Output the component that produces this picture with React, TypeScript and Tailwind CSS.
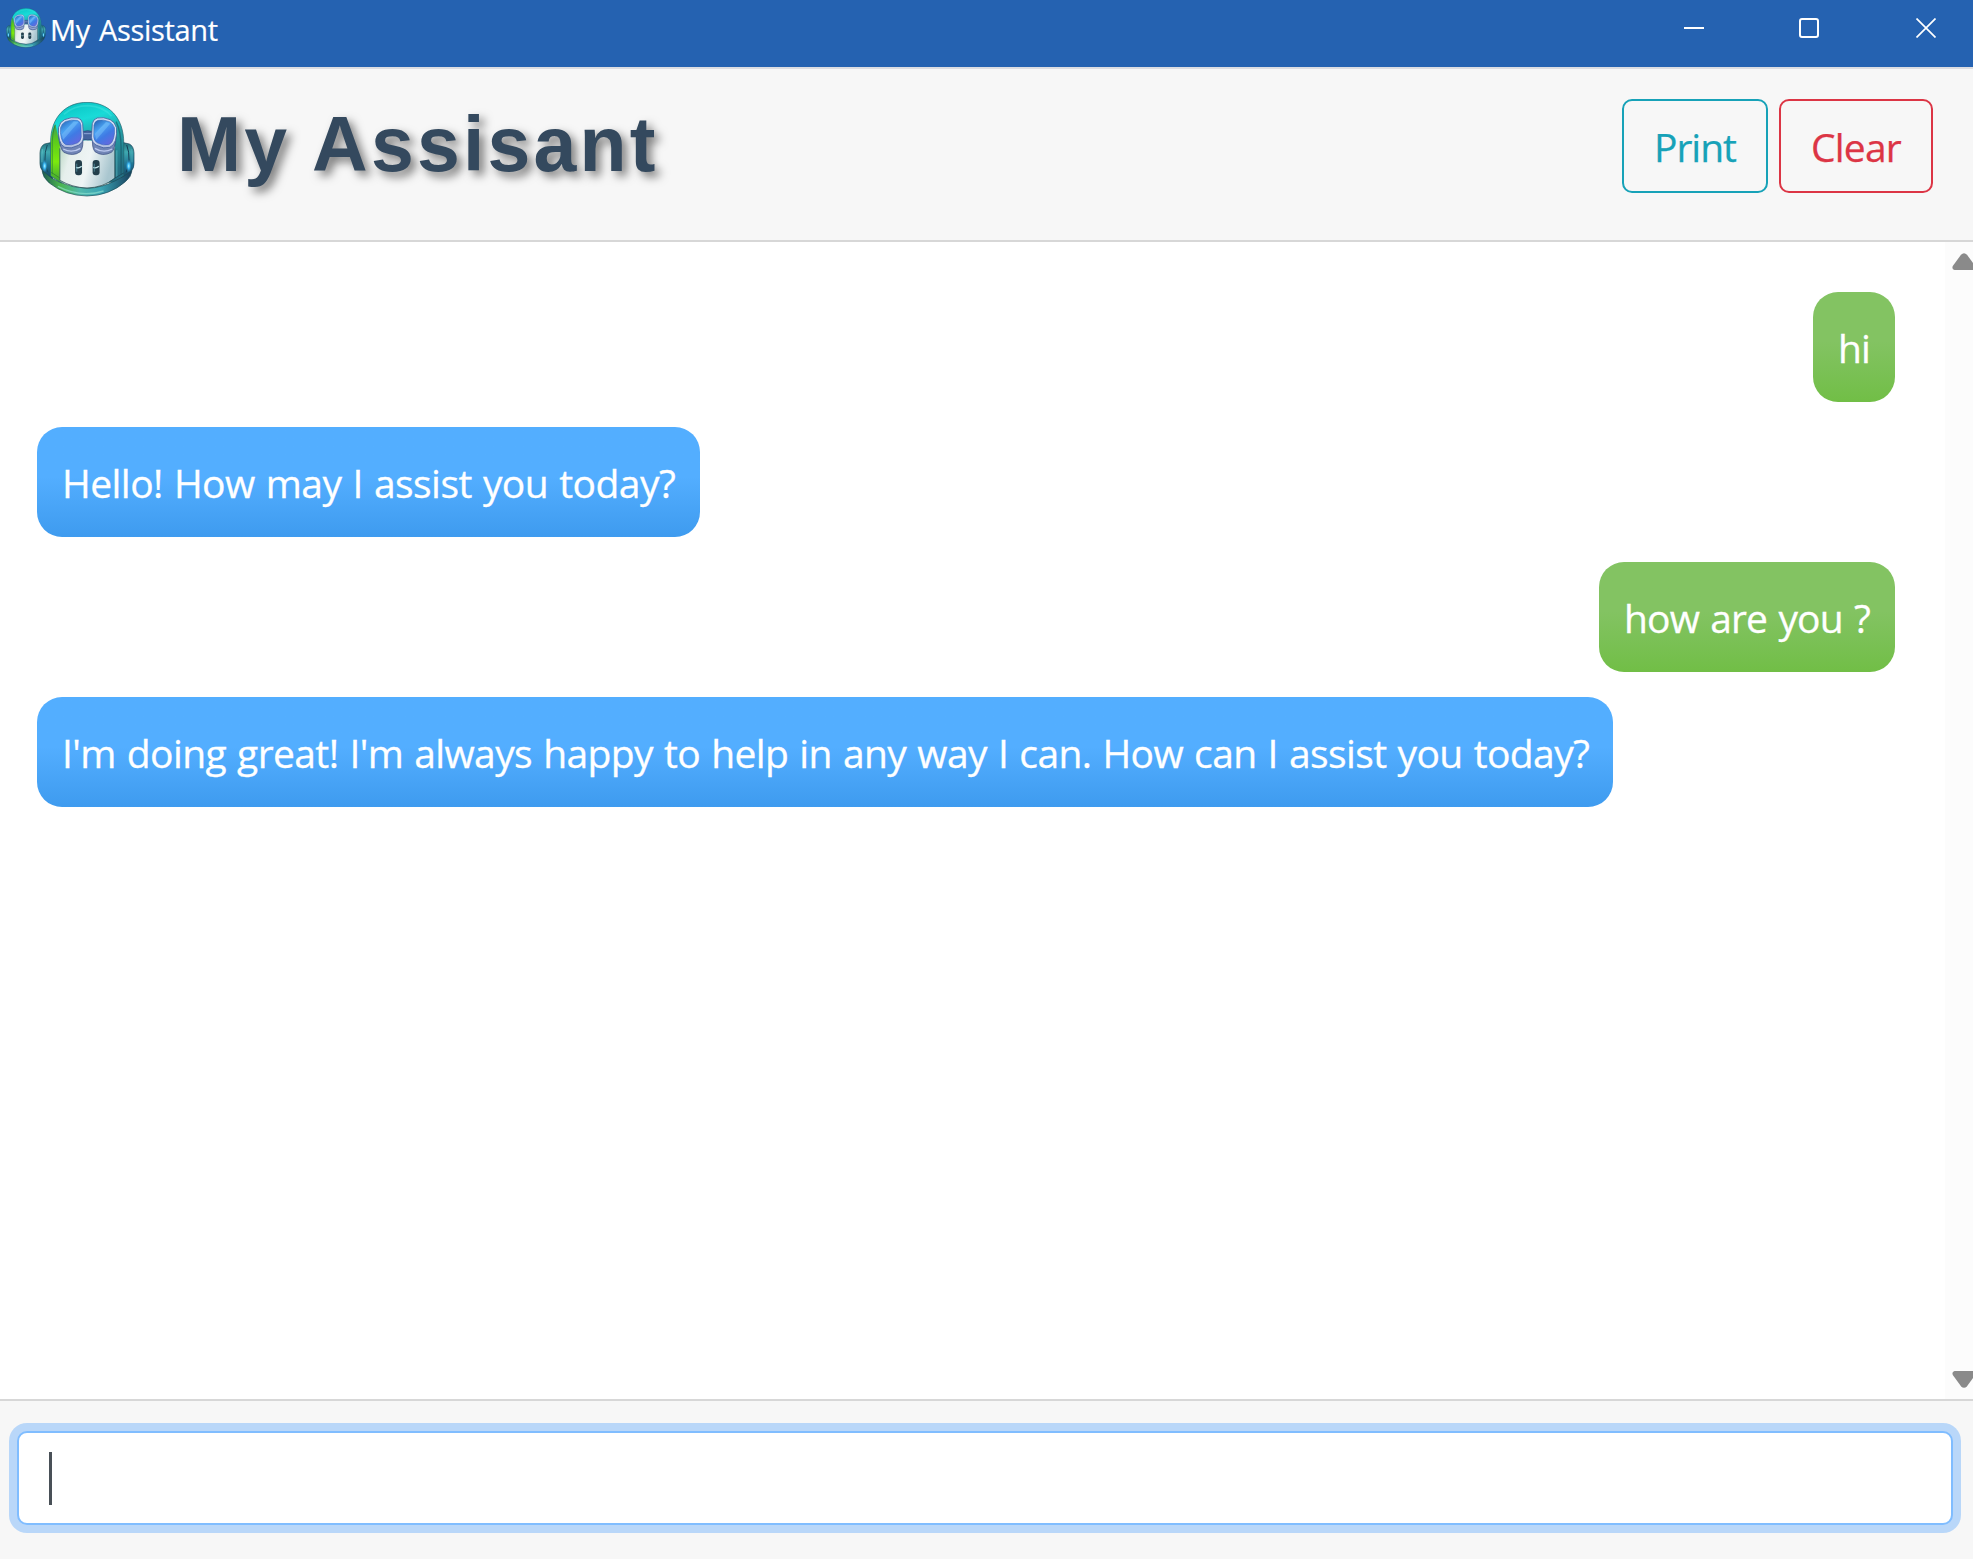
import { useId } from "react";

function Robot({ className }: { className: string }) {
  const id = useId().replace(/[^a-zA-Z0-9]/g, "");
  const u = (n: string) => `url(#${n}${id})`;
  return (
    <svg className={className} viewBox="55 51 290 285" preserveAspectRatio="none" aria-hidden="true">
      <defs>
        <linearGradient id={`dome${id}`} x1="0" y1="0" x2="0.25" y2="1">
          <stop offset="0" stopColor="#158f98" />
          <stop offset="0.12" stopColor="#0cc9c8" />
          <stop offset="0.3" stopColor="#19dbd8" />
          <stop offset="0.55" stopColor="#249fa6" />
          <stop offset="1" stopColor="#246f83" />
        </linearGradient>
        <linearGradient id={`green${id}`} x1="0" y1="0" x2="0" y2="1">
          <stop offset="0" stopColor="#3c9a58" />
          <stop offset="0.3" stopColor="#5ccb1c" />
          <stop offset="0.65" stopColor="#7bea0d" />
          <stop offset="1" stopColor="#3e9e3b" />
        </linearGradient>
        <linearGradient id={`ear${id}`} x1="0" y1="0" x2="0" y2="1">
          <stop offset="0" stopColor="#226d7a" />
          <stop offset="0.25" stopColor="#3fa9b0" />
          <stop offset="0.6" stopColor="#1d6f91" />
          <stop offset="1" stopColor="#173f52" />
        </linearGradient>
        <linearGradient id={`jaw${id}`} x1="0" y1="0" x2="1" y2="0">
          <stop offset="0" stopColor="#1e5a52" />
          <stop offset="0.2" stopColor="#4bb54c" />
          <stop offset="0.42" stopColor="#51b9ac" />
          <stop offset="0.65" stopColor="#3ba5b5" />
          <stop offset="1" stopColor="#183f5c" />
        </linearGradient>
        <linearGradient id={`face${id}`} x1="0" y1="0" x2="1" y2="0.25">
          <stop offset="0" stopColor="#b5d5c0" />
          <stop offset="0.25" stopColor="#e6efec" />
          <stop offset="0.6" stopColor="#eef4f5" />
          <stop offset="1" stopColor="#a9c6cf" />
        </linearGradient>
        <linearGradient id={`lens${id}`} x1="0.1" y1="0" x2="0.7" y2="1">
          <stop offset="0" stopColor="#2563b4" />
          <stop offset="0.35" stopColor="#4aa2f2" />
          <stop offset="0.65" stopColor="#3f7ae4" />
          <stop offset="1" stopColor="#6468de" />
        </linearGradient>
        <linearGradient id={`rim${id}`} x1="0" y1="0" x2="0" y2="1">
          <stop offset="0" stopColor="#cfdcf3" />
          <stop offset="0.6" stopColor="#e4ebfa" />
          <stop offset="1" stopColor="#aab8dd" />
        </linearGradient>
        <radialGradient id={`glow${id}`}>
          <stop offset="0" stopColor="#a8f4ff" />
          <stop offset="0.4" stopColor="#3db8f2" />
          <stop offset="1" stopColor="#2083b8" stopOpacity="0" />
        </radialGradient>
      </defs>

      {/* ear pieces */}
      <path d="M94 172 L72 177 Q59 183 58 204 V236 Q58 250 66 257 L96 288Z" fill={u("ear")} stroke="#1a4a55" strokeWidth="2" />
      <path d="M306 172 L328 177 Q341 183 342 204 V236 Q342 250 334 257 L304 288Z" fill={u("ear")} stroke="#173f5a" strokeWidth="2" />
      <path d="M80 180 Q72 200 73 226 Q74 246 82 262" fill="none" stroke="#174b5c" strokeWidth="3" />
      <path d="M320 180 Q328 200 327 226 Q326 246 318 262" fill="none" stroke="#143a52" strokeWidth="3" />
      <path d="M66 192 Q63 205 64 232" fill="none" stroke="#62bfc7" strokeWidth="3" opacity="0.7" />
      <path d="M334 192 Q337 205 336 232" fill="none" stroke="#4ea6b8" strokeWidth="3" opacity="0.7" />
      <ellipse cx="72" cy="243" rx="9" ry="20" fill={u("glow")} />
      <ellipse cx="326" cy="243" rx="9" ry="20" fill={u("glow")} />

      {/* helmet */}
      <path d="M90 272 V172 C90 94 138 52 200 52 C264 52 311 96 311 174 V272 L284 292 H118Z" fill={u("dome")} stroke="#24606c" strokeWidth="2" />
      <path d="M91 272 V172 Q92 140 104 116 L120 188 V292Z" fill={u("green")} />
      <path d="M104 120 Q94 146 95 190 V268" fill="none" stroke="#2e7d3b" strokeWidth="3" opacity="0.7" />
      <path d="M288 110 Q303 140 303 190 V268" fill="none" stroke="#1b5364" strokeWidth="4" opacity="0.6" />
      <path d="M130 88 Q160 62 204 62 Q250 64 274 94" fill="none" stroke="#58ece4" strokeWidth="5" opacity="0.35" />

      {/* jaw */}
      <path d="M64 256 Q92 282 118 292 Q160 309 200 310 Q246 308 284 288 Q312 276 336 256 Q334 276 316 290 Q268 332 200 333 Q134 332 86 294 Q66 278 64 256Z" fill={u("jaw")} stroke="#1b4c58" strokeWidth="2" />
      <path d="M112 304 Q152 325 198 326 Q226 326 250 318" fill="none" stroke="#8ce0cf" strokeWidth="4" opacity="0.65" />

      {/* face plate */}
      <path d="M118 184 Q160 168 200 166 Q244 168 284 184 V278 Q246 308 200 308 Q154 308 118 288Z" fill={u("face")} />
      <path d="M118 190 V286 Q156 308 200 309 Q248 308 284 280 V190" fill="none" stroke="#2b5358" strokeWidth="2.5" />
      <path d="M290 196 V276" stroke="#55b6be" strokeWidth="4" opacity="0.6" />
      <path d="M92 262 L118 279" stroke="#2e7b2e" strokeWidth="2" />
      <path d="M284 279 L311 264" stroke="#173f50" strokeWidth="2" />

      {/* goggles */}
      <path d="M186 140 Q202 134 218 140 V162 Q202 168 186 162Z" fill="#45649f" stroke="#2b4478" strokeWidth="2" />
      <path d="M190 146 H214" stroke="#8ba6d8" strokeWidth="3" />
      <path d="M114 150 Q118 192 130 202 Q158 216 180 200 Q190 188 187 156Z" fill="#7185b6" stroke="#34487b" strokeWidth="2" />
      <path d="M288 150 Q286 192 274 202 Q246 216 224 200 Q214 188 217 156Z" fill="#7185b6" stroke="#34487b" strokeWidth="2" />
      <path d="M128 192 Q154 206 180 190" fill="none" stroke="#bccaf0" strokeWidth="4" />
      <path d="M276 192 Q250 206 224 190" fill="none" stroke="#bccaf0" strokeWidth="4" />
      <path d="M132 104 Q152 95 173 99 Q184 102 187 116 L189 158 Q188 174 174 181 Q152 193 133 187 Q121 182 117 166 Q112 146 114 128 Q118 110 132 104Z" fill={u("rim")} stroke="#43609c" strokeWidth="2.5" />
      <path d="M270 104 Q250 95 231 99 Q219 102 216 116 L214 158 Q215 174 229 181 Q250 193 269 187 Q281 182 286 166 Q291 146 289 128 Q284 110 270 104Z" fill={u("rim")} stroke="#43609c" strokeWidth="2.5" />
      <path d="M134 110 Q154 102 171 106 Q180 109 182 121 L183 155 Q182 168 171 174 Q152 183 136 179 Q126 174 122 158 Q118 142 120 128 Q124 115 134 110Z" fill={u("lens")} stroke="#3764ac" strokeWidth="1.5" />
      <path d="M268 110 Q248 102 233 106 Q223 109 221 121 L220 155 Q221 168 232 174 Q250 183 266 179 Q277 174 281 158 Q285 142 283 128 Q278 115 268 110Z" fill={u("lens")} stroke="#3764ac" strokeWidth="1.5" />
      <path d="M124 148 L160 109 L174 112 L128 164Z" fill="#8dd0ff" opacity="0.4" />
      <path d="M224 146 L258 110 L270 116 L228 164Z" fill="#8dd0ff" opacity="0.4" />

      {/* eyes */}
      <rect x="164" y="225" width="21" height="46" rx="9" fill="#233f4c" />
      <rect x="217" y="225" width="21" height="46" rx="9" fill="#233f4c" />
      <path d="M167 247 Q175 251 184 244" fill="none" stroke="#c3e8ee" strokeWidth="4" />
      <path d="M219 247 Q227 251 236 244" fill="none" stroke="#c3e8ee" strokeWidth="4" />
      <path d="M169 236 V260 M222 236 V260" stroke="#5a9aab" strokeWidth="3" opacity="0.7" />
    </svg>
  );
}

function TitleBar() {
  return (
    <header className="flex h-[69px] shrink-0 items-start justify-between border-b-2 border-[#dcdde2] bg-[#2562b1] text-white">
      <div className="flex items-start">
        <Robot className="mt-2 ml-1.5 size-10" />
        <span className="ml-1 pt-px text-[29px] leading-[58px] tracking-[-0.35px] [word-spacing:2px] [-webkit-text-stroke:0.2px]">
          My Assistant
        </span>
      </div>
      <div className="mt-[18px] mr-[37px] flex gap-[97px]">
        <svg className="mr-[-2px] size-5" viewBox="0 0 20 20" aria-label="Minimize">
          <rect y="9" width="20" height="2" fill="white" />
        </svg>
        <svg className="size-5" viewBox="0 0 20 20" fill="none" stroke="white" strokeWidth="2" aria-label="Maximize">
          <rect x="1" y="1" width="18" height="18" rx="2" />
        </svg>
        <svg className="size-5" viewBox="0 0 20 20" stroke="white" strokeWidth="1.7" aria-label="Close">
          <path d="M0.5 0.5 L19.5 19.5 M19.5 0.5 L0.5 19.5" />
        </svg>
      </div>
    </header>
  );
}

function Toolbar() {
  return (
    <div className="flex h-[173px] shrink-0 items-start border-b-2 border-[#d7d7d7] bg-[#f7f7f7]">
      <Robot className="mt-[33px] ml-[39px] h-[95px] w-[96px]" />
      <h1 className="mt-[25px] ml-[42px] font-['Liberation_Sans',Arial,sans-serif] text-[77px] leading-[100px] font-bold tracking-[3.2px] text-[#34495e] [text-shadow:5px_5px_10px_rgba(0,0,0,0.5)]">
        My Assisant
      </h1>
      <div className="mt-[30px] mr-10 ml-auto flex gap-[11px] text-[39px] [-webkit-text-stroke:0.25px]">
        <button className="h-[94px] w-[146px] rounded-[10px] border-2 border-[#17a2b8] pt-0.5 tracking-[-1px] text-[#17a2b8]">Print</button>
        <button className="h-[94px] w-[154px] rounded-[10px] border-2 border-[#dc3545] pt-0.5 tracking-[-0.8px] text-[#dc3545]">Clear</button>
      </div>
    </div>
  );
}

const bubble =
  "h-[110px] rounded-[25px] px-[25px] pt-[26px] text-[39px] leading-[60px] whitespace-nowrap text-white [-webkit-text-stroke:0.3px]";
const mine = "self-end bg-linear-to-b from-[#83c362] from-45% to-[#71be46]";
const theirs = "self-start bg-linear-to-b from-[#53aeff] from-45% to-[#3e9bef]";

const messages = [
  { text: "hi", look: mine, size: "w-[82px] tracking-[-0.8px]" },
  { text: "Hello! How may I assist you today?", look: theirs, size: "w-[663px] tracking-[-0.55px] [word-spacing:1.5px]" },
  { text: "how are you ?", look: mine, size: "w-[296px] tracking-[-0.87px] [word-spacing:2px]" },
  {
    text: "I'm doing great! I'm always happy to help in any way I can. How can I assist you today?",
    look: theirs,
    size: "w-[1576px] tracking-[-0.6px] [word-spacing:1.5px]",
  },
];

function Arrow({ className }: { className: string }) {
  return (
    <svg className={className} viewBox="0 0 24 17" aria-hidden="true">
      <path d="M2.5 17 Q-0.5 16 0.8 13 L9 1.8 Q12 -1.3 15 1.8 L23.2 13 Q24.5 16 21.5 17Z" fill="#8a8a8a" />
    </svg>
  );
}

export default function App() {
  return (
    <div className="flex h-[1559px] w-[1973px] flex-col overflow-hidden bg-white font-['Open_Sans','Noto_Sans',sans-serif]">
      <TitleBar />
      <Toolbar />
      <main className="flex min-h-0 flex-1">
        <div className="flex flex-1 flex-col gap-[25px] pt-[50px] pr-[50px] pl-[37px]">
          {messages.map((m) => (
            <div key={m.text} className={`${bubble} ${m.look} ${m.size}`}>
              {m.text}
            </div>
          ))}
        </div>
        <div className="flex w-7 flex-col justify-between overflow-hidden bg-[#fcfcfc] pt-[11px] pb-[11px] pl-[7px]">
          <Arrow className="h-[17px] w-6 shrink-0" />
          <Arrow className="h-[17px] w-6 shrink-0 rotate-180" />
        </div>
      </main>
      <footer className="h-[160px] shrink-0 border-t-2 border-[#d7d7d7] bg-[#f7f7f7] pt-[30px] pr-5 pl-[17px]">
        <div className="flex h-[94px] items-center rounded-[10px] border-2 border-[#80bdff] bg-white pl-[30px] shadow-[0_0_0_8px_#b9d7f9]">
          <div className="h-[53px] w-[3px] bg-[#495057]" />
        </div>
      </footer>
    </div>
  );
}
